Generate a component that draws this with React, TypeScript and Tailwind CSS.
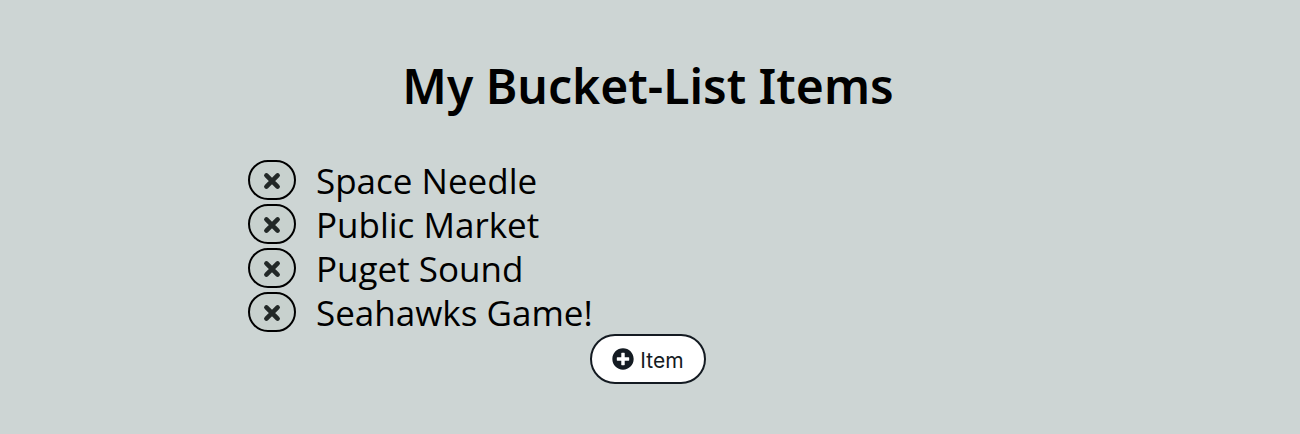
import { FaPlusCircle } from "react-icons/fa";
import { useState } from "react";

function CrossIcon() {
  return (
    <svg viewBox="0 0 18 18" className="size-[18px]" fill="none" stroke="currentColor" strokeWidth="4.6" strokeLinecap="round" aria-hidden="true">
      <path d="M3.4 3.4 14.6 14.6M14.6 3.4 3.4 14.6" />
    </svg>
  );
}

export default function App() {
  const [items, setItems] = useState(["Space Needle", "Public Market", "Puget Sound", "Seahawks Game!"]);
  return (
    <main className="min-h-screen bg-[#cdd5d4] pt-14 pr-7 pb-12 pl-6 font-['Noto_Sans',sans-serif] text-black">
      <div className="mx-auto flex max-w-[800px] flex-col">
        <h1 className="text-center text-[48px] leading-[60px] font-semibold">My Bucket-List Items</h1>
        <ul className="mt-11 flex flex-col gap-1">
          {items.map((item) => (
            <li key={item} className="flex h-10 items-center gap-5">
              <button
                type="button"
                aria-label={`Remove ${item}`}
                onClick={() => setItems(items.filter((other) => other !== item))}
                className="flex h-10 w-12 items-center justify-center rounded-[20px] border-2 border-black bg-[#c8d1ce] pt-0.5 text-[#222827]"
              >
                <CrossIcon />
              </button>
              <span className="pt-0.5 font-['Open_Sans','Noto_Sans',sans-serif] text-[35px] leading-10">{item}</span>
            </li>
          ))}
        </ul>
        <button
          type="button"
          onClick={() => setItems([...items, `New Item ${items.length + 1}`])}
          className="mt-0.5 flex h-[50px] items-center gap-1.5 self-center rounded-[25px] border-2 border-[#141b22] bg-white px-5 font-['Inter',sans-serif] text-[21px] text-[#141b22]"
        >
          <FaPlusCircle className="size-[22px]" />
          <span className="pt-1">Item</span>
        </button>
      </div>
    </main>
  );
}
